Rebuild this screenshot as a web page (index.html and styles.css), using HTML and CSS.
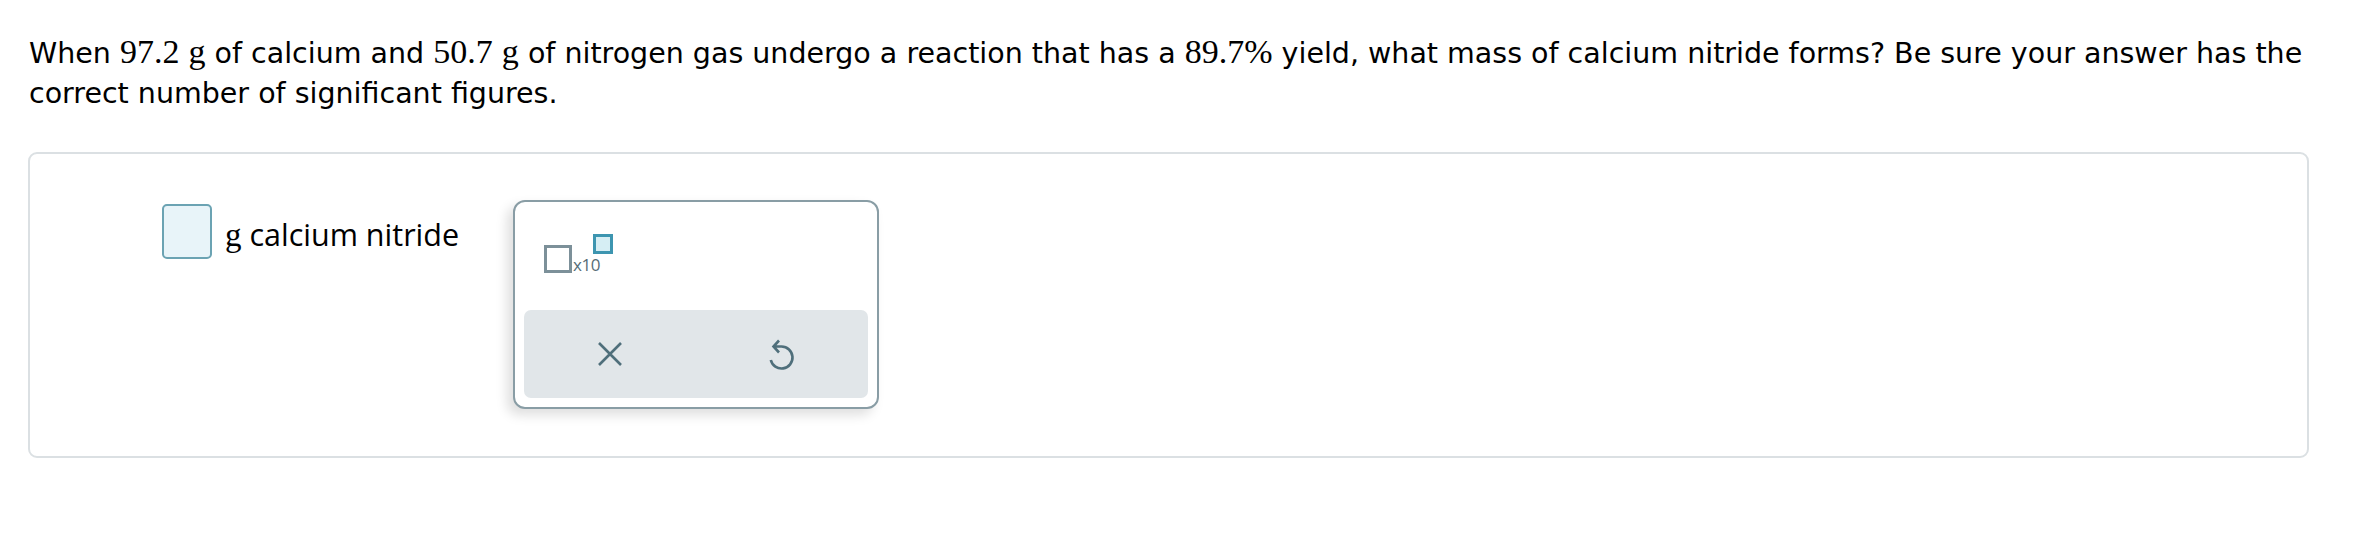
FILE: index.html
```html
<!DOCTYPE html>
<html>
<head>
<meta charset="utf-8">
<link rel="stylesheet" href="styles.css">
</head>
<body>
<div class="page">
  <p class="question">When <span class="m">97.2</span> <span class="mg">g</span> of calcium and <span class="m">50.7</span> <span class="mg">g</span> of nitrogen gas undergo a reaction that has a <span class="m">89.7%</span> yield, what mass of calcium nitride forms? Be sure your answer has the correct number of significant figures.</p>
  <div class="answer-box">
    <div class="answer-row">
      <div class="input"></div>
      <div class="label"><span class="lg">g</span> calcium nitride</div>
      <div class="popup">
        <div class="popup-top">
          <div class="sci">
            <span class="base"></span>
            <span class="x10">x10</span>
            <span class="exp"></span>
          </div>
        </div>
        <div class="actions">
          <div class="act">
            <svg width="26" height="26" viewBox="0 0 26 26"><path d="M2 2 L24 24 M24 2 L2 24" stroke="#4f6f7b" stroke-width="2.6" fill="none"/></svg>
          </div>
          <div class="act">
            <svg width="28" height="36" viewBox="0 0 28 36"><path d="M11 4.5 L5.5 10.5 L11 16.5 M5.5 10.5 L13.5 10.5 A11 11 0 1 1 2.8 24" stroke="#4f6f7b" stroke-width="2.6" fill="none" stroke-linecap="butt" stroke-linejoin="miter"/></svg>
          </div>
        </div>
      </div>
    </div>
  </div>
</div>
</body>
</html>
```
FILE: styles.css
```css
html, body {
  margin: 0;
  padding: 0;
  background: #ffffff;
}
.page {
  width: 2281px;
  padding-left: 28px;
  padding-top: 34px;
}
.question {
  margin: 0;
  font-family: "DejaVu Sans", Verdana, sans-serif;
  font-size: 28.5px;
  line-height: 40px;
  color: #000;
  padding-left: 1px;
}
.m, .mg {
  font-family: "Liberation Serif", "Times New Roman", serif;
  font-size: 34px;
  line-height: 30px;
}
.answer-box {
  margin-top: 38px;
  border: 2px solid #dbe0e3;
  border-radius: 9px;
  height: 306px;
  box-sizing: border-box;
}
.answer-row {
  display: flex;
  align-items: flex-start;
  padding-left: 132px;
  padding-top: 46px;
}
.input {
  width: 50px;
  height: 55px;
  box-sizing: border-box;
  border: 2px solid #6ba3b3;
  border-radius: 5px;
  background: #e8f4f9;
  margin-top: 4px;
}
.label {
  font-family: "Open Sans", sans-serif;
  font-size: 30.5px;
  line-height: 40px;
  color: #000;
  margin-left: 13px;
  margin-top: 14px;
}
.lg {
  font-family: "Liberation Serif", serif;
  font-size: 33px;
}
.popup {
  margin-left: 54px;
  width: 366px;
  height: 209px;
  box-sizing: border-box;
  border: 2px solid #899da5;
  border-radius: 12px;
  background: #fff;
  box-shadow: -6px 6px 12px rgba(0, 0, 0, 0.13);
  padding: 0 9px 9px 9px;
  display: flex;
  flex-direction: column;
}
.popup-top {
  height: 108px;
  padding-left: 20px;
  padding-top: 32px;
  box-sizing: border-box;
}
.sci {
  display: flex;
  align-items: flex-end;
}
.base {
  width: 28px;
  height: 28px;
  box-sizing: border-box;
  border: 3px solid #7c9099;
}
.x10 {
  font-family: "Open Sans", sans-serif;
  font-size: 17px;
  line-height: 17px;
  color: #566d77;
  margin-left: 1px;
  letter-spacing: -0.5px;
}
.exp {
  width: 20px;
  height: 20px;
  box-sizing: border-box;
  border: 3px solid #3d95b0;
  background: #d6eef4;
  margin-left: -7px;
  margin-bottom: 19px;
}
.actions {
  flex: 1;
  background: #e1e6e9;
  border-radius: 7px;
  display: flex;
}
.act {
  flex: 1;
  display: flex;
  align-items: center;
  justify-content: center;
}
```
